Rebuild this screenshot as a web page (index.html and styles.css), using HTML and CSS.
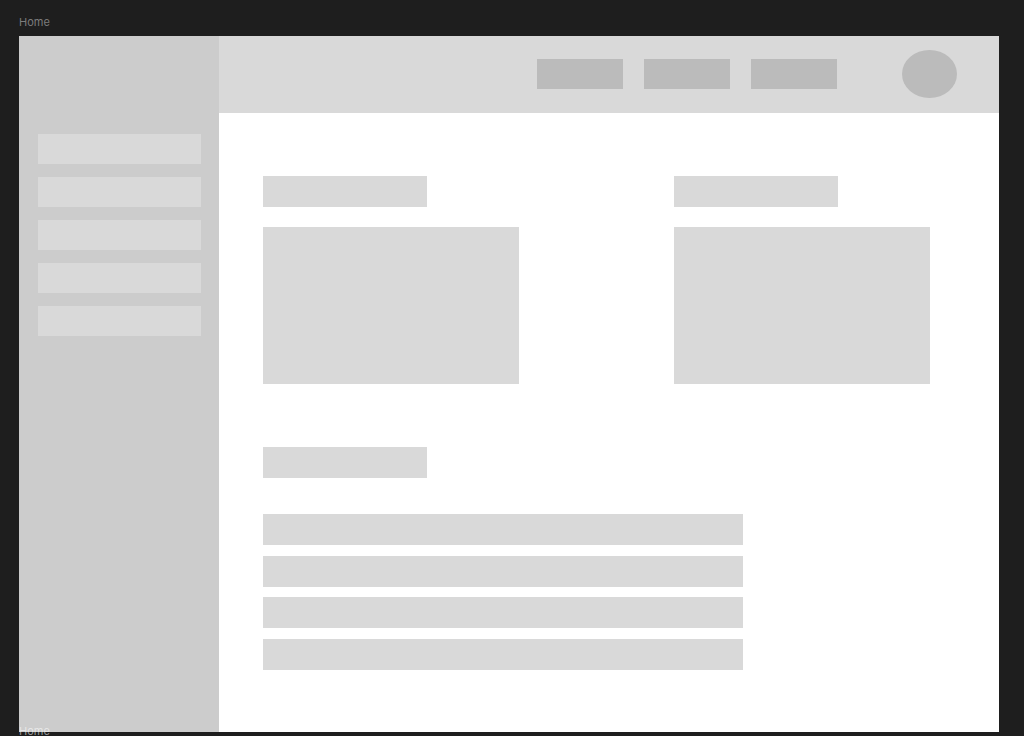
FILE: index.html
```html
<!DOCTYPE html>
<html lang="en">
<head>
  <meta charset="UTF-8">
  <meta name="viewport" content="width=device-width, initial-scale=1.0">
  <title>Home - Wireframe</title>
  <link rel="stylesheet" href="styles.css">
</head>
<body>
  <div class="canvas">
    <div class="frame-label">Home</div>

    <!-- Home frame -->
    <div class="frame">
      <aside class="sidebar">
        <div class="side-item"></div>
        <div class="side-item"></div>
        <div class="side-item"></div>
        <div class="side-item"></div>
        <div class="side-item"></div>
      </aside>

      <div class="main">
        <header class="topbar">
          <nav class="nav">
            <div class="nav-item"></div>
            <div class="nav-item"></div>
            <div class="nav-item"></div>
          </nav>
          <div class="avatar"></div>
        </header>

        <section class="content">
          <div class="cards">
            <div class="card-block">
              <div class="block-title"></div>
              <div class="card"></div>
            </div>
            <div class="card-block">
              <div class="block-title"></div>
              <div class="card"></div>
            </div>
          </div>

          <div class="list-block">
            <div class="block-title"></div>
            <div class="rows">
              <div class="row"></div>
              <div class="row"></div>
              <div class="row"></div>
              <div class="row"></div>
            </div>
          </div>
        </section>
      </div>
    </div>

    <div class="frame-label frame-label-next">Home</div>
  </div>
</body>
</html>
```

FILE: styles.css
```css
/* Canvas */
:root {
  --canvas-bg: #1e1e1e;
  --sidebar: #cccccc;
  --header: #d9d9d9;
  --block: #d9d9d9;
  --dark-block: #bbbbbb;
}

* {
  margin: 0;
  padding: 0;
  box-sizing: border-box;
}

html, body {
  height: 100%;
  overflow: hidden;
}

body {
  background-color: var(--canvas-bg);
  font-family: 'Inter', 'Roboto', sans-serif;
}

.canvas {
  position: relative;
  padding: 0 25px 0 19px;
}

.frame-label {
  height: 36px;
  padding-top: 15px;
  font-size: 11px;
  line-height: 14px;
  color: #7c7c7c;
}

.frame-label-next {
  position: absolute;
  left: 19px;
  top: 724px;
  padding-top: 0;
  color: rgba(255, 255, 255, 0.55);
}

/* Frame */
.frame {
  display: grid;
  grid-template-columns: 200px 1fr;
  width: 980px;
  height: 696px;
  background-color: white;
}

/* Sidebar */
.sidebar {
  background-color: var(--sidebar);
  padding: 98px 18px 0 19px;
  display: flex;
  flex-direction: column;
  gap: 13px;
}

.side-item {
  width: 163px;
  height: 30px;
  background-color: var(--block);
}

/* Header */
.topbar {
  height: 77px;
  background-color: var(--header);
  display: flex;
  align-items: center;
  justify-content: flex-end;
  padding: 0 42px 1px 0;
  gap: 65px;
}

.nav {
  display: flex;
  gap: 21px;
}

.nav-item {
  width: 86px;
  height: 30px;
  background-color: var(--dark-block);
}

.avatar {
  width: 55px;
  height: 48px;
  border-radius: 50%;
  background-color: var(--dark-block);
}

/* Content */
.content {
  padding: 63px 0 0 44px;
}

.cards {
  display: flex;
  gap: 155px;
}

.block-title {
  width: 164px;
  height: 31px;
  background-color: var(--block);
  margin-bottom: 20px;
}

.card {
  width: 256px;
  height: 157px;
  background-color: var(--block);
}

.list-block {
  margin-top: 63px;
}

.list-block .block-title {
  margin-bottom: 36px;
}

.rows {
  display: flex;
  flex-direction: column;
  gap: 10.5px;
}

.row {
  width: 480px;
  height: 31px;
  background-color: var(--block);
}
```
